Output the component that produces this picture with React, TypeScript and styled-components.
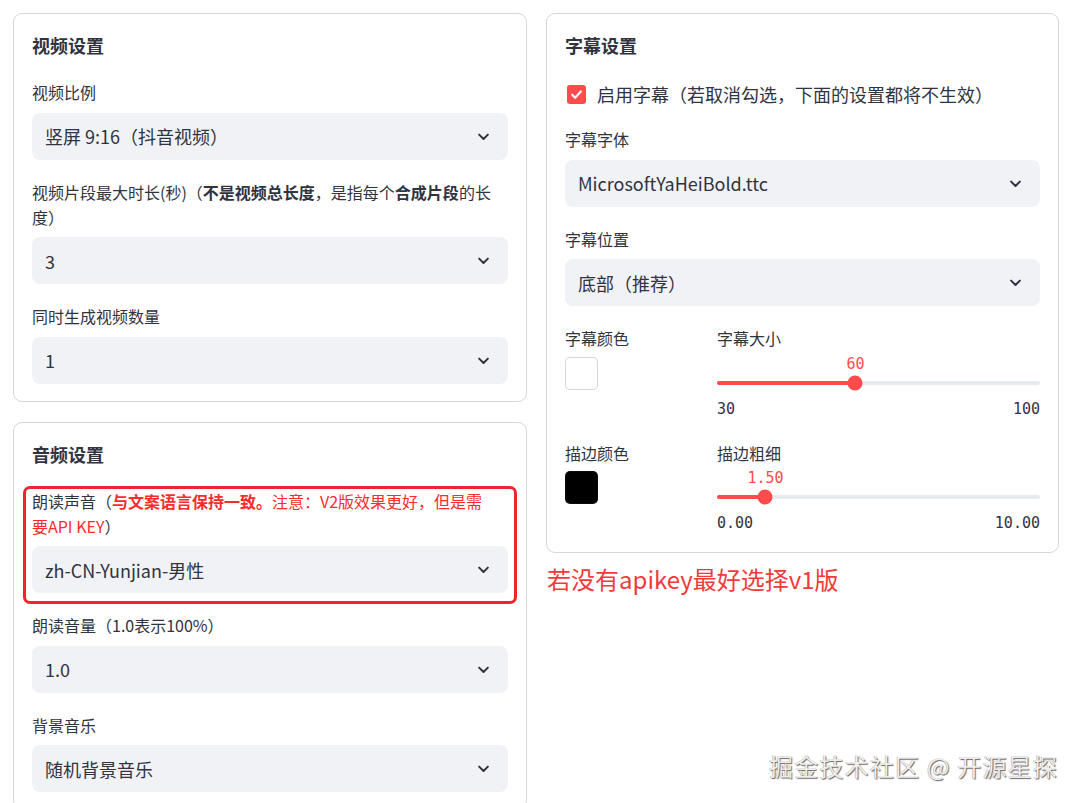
import styled, { createGlobalStyle } from 'styled-components';

const GlobalStyle = createGlobalStyle`
  html, body {
    margin: 0;
    padding: 0;
    background: #ffffff;
    overflow: hidden;
  }
  body {
    font-family: "Noto Sans CJK SC", "Noto Sans", sans-serif;
    color: #31333f;
  }
`;

const Page = styled.div`
  position: relative;
  width: 1080px;
  height: 803px;
  box-sizing: border-box;
  padding: 13px 21px 0 13px;
  display: grid;
  grid-template-columns: 514px 513px;
  column-gap: 19px;
  align-items: start;
  overflow: hidden;
`;

const Column = styled.div`
  display: flex;
  flex-direction: column;
  gap: 20px;
`;

const Card = styled.section`
  border: 1px solid rgba(49, 51, 63, 0.2);
  border-radius: 9px;
  padding: 19px 18px 17px;
  display: flex;
  flex-direction: column;
  gap: 20px;
`;

const CardTitle = styled.h3`
  margin: 0 0 2px;
  font-size: 18px;
  line-height: 25px;
  font-weight: 700;
`;

const Field = styled.div`
  display: flex;
  flex-direction: column;
`;

const Label = styled.label<{ $narrow?: boolean }>`
  font-size: 16px;
  line-height: 25px;
  margin-bottom: 7.5px;
  padding-right: ${(p) => (p.$narrow ? '20px' : '0')};
  color: #31333f;
`;

const Strong = styled.strong`
  font-weight: 700;
`;

const RedText = styled.span<{ $bold?: boolean }>`
  color: #ff2b2b;
  font-weight: ${(p) => (p.$bold ? 700 : 400)};
`;

const SelectBox = styled.div`
  height: 47px;
  box-sizing: border-box;
  background: #f0f2f6;
  border-radius: 8px;
  display: flex;
  align-items: center;
  justify-content: space-between;
  padding: 0 17px 0 13px;
  font-size: 18px;
  color: #31333f;
`;

// highlight frame drawn around the voice picker
const Highlight = styled.div`
  margin: -3px -9px -11px;
  padding: 0 6px 8px;
  border: 3px solid #f0242f;
  border-radius: 7px;
  display: flex;
  flex-direction: column;
`;

const CheckRow = styled.div`
  display: flex;
  align-items: center;
  gap: 11px;
  margin-top: 2px;
  padding-left: 2px;
  font-size: 18px;
  line-height: 25px;
`;

const CheckBox = styled.span`
  width: 19px;
  height: 19px;
  border-radius: 3px;
  background: #ff4b4b;
  display: flex;
  align-items: center;
  justify-content: center;
`;

const ControlGrid = styled.div`
  display: grid;
  grid-template-columns: 134px 1fr;
  column-gap: 18px;
  row-gap: 20px;
`;

const Swatch = styled.div<{ $color: string }>`
  width: 33px;
  height: 33px;
  box-sizing: border-box;
  border-radius: 5px;
  background: ${(p) => p.$color};
  border: 1px solid rgba(49, 51, 63, 0.2);
  margin-top: -2px;
`;

const SliderBlock = styled.div`
  margin-top: -7px;
`;

const SliderArea = styled.div`
  position: relative;
  height: 38px;
`;

const Track = styled.div`
  position: absolute;
  left: 0;
  right: 0;
  top: 29px;
  height: 4px;
  border-radius: 2px;
  background: #e6e9ef;
`;

const Fill = styled.div`
  position: absolute;
  left: 0;
  top: 0;
  bottom: 0;
  border-radius: 2px;
  background: #ff4b4b;
`;

const Thumb = styled.div`
  position: absolute;
  top: 50%;
  width: 15px;
  height: 15px;
  border-radius: 50%;
  background: #ff4b4b;
  transform: translate(-50%, -50%);
`;

const ThumbValue = styled.div`
  position: absolute;
  top: 0;
  transform: translateX(-50%);
  font-family: "DejaVu Sans Mono", "Liberation Mono", monospace;
  font-size: 15px;
  line-height: 24px;
  color: #ff4b4b;
  white-space: nowrap;
`;

const MinMax = styled.div`
  display: flex;
  justify-content: space-between;
  font-family: "DejaVu Sans Mono", "Liberation Mono", monospace;
  font-size: 15px;
  line-height: 24px;
  margin-top: 7px;
  color: #31333f;
`;

const Note = styled.div`
  margin-top: 12px;
  padding-left: 1px;
  font-size: 24px;
  line-height: 28px;
  color: #f23a3a;
`;

const Watermark = styled.div`
  position: absolute;
  right: 22px;
  bottom: 22px;
  font-size: 24px;
  line-height: 30px;
  color: #eeeeee;
  letter-spacing: 1.2px;
  text-shadow: 1px 1px 1px rgba(0, 0, 0, 0.6), -0.5px -0.5px 0 rgba(0, 0, 0, 0.35);
`;

const Chevron = () => (
  <svg width="15" height="15" viewBox="0 0 24 24" fill="none" stroke="#31333f" strokeWidth="3.2" strokeLinecap="round" strokeLinejoin="round">
    <polyline points="5 9 12 16 19 9" />
  </svg>
);

const Select = ({ value }: { value: string }) => (
  <SelectBox>
    <span>{value}</span>
    <Chevron />
  </SelectBox>
);

const Slider = ({ min, max, value, format }: { min: number; max: number; value: number; format: (n: number) => string }) => {
  const pct = ((value - min) / (max - min)) * 100;
  return (
    <SliderBlock>
      <SliderArea>
        <ThumbValue style={{ left: `${pct}%` }}>{format(value)}</ThumbValue>
        <Track>
          <Fill style={{ width: `${pct}%` }} />
          <Thumb style={{ left: `${pct}%` }} />
        </Track>
      </SliderArea>
      <MinMax>
        <span>{format(min)}</span>
        <span>{format(max)}</span>
      </MinMax>
    </SliderBlock>
  );
};

const App = () => (
  <>
    <GlobalStyle />
    <Page>
      <Column>
        <Card>
          <CardTitle>视频设置</CardTitle>
          <Field>
            <Label>视频比例</Label>
            <Select value="竖屏 9:16（抖音视频）" />
          </Field>
          <Field>
            <Label>
              视频片段最大时长(秒)（<Strong>不是视频总长度</Strong>，是指每个<Strong>合成片段</Strong>的长度）
            </Label>
            <Select value="3" />
          </Field>
          <Field>
            <Label>同时生成视频数量</Label>
            <Select value="1" />
          </Field>
        </Card>

        <Card>
          <CardTitle>音频设置</CardTitle>
          <Highlight>
            <Label $narrow>
              朗读声音（<RedText $bold>与文案语言保持一致。</RedText>
              <RedText>注意：V2版效果更好，但是需要API KEY</RedText>）
            </Label>
            <Select value="zh-CN-Yunjian-男性" />
          </Highlight>
          <Field>
            <Label>朗读音量（1.0表示100%）</Label>
            <Select value="1.0" />
          </Field>
          <Field>
            <Label>背景音乐</Label>
            <Select value="随机背景音乐" />
          </Field>
        </Card>
      </Column>

      <div>
        <Card>
          <CardTitle>字幕设置</CardTitle>
          <CheckRow>
            <CheckBox>
              <svg width="13" height="13" viewBox="0 0 24 24" fill="none" stroke="#ffffff" strokeWidth="4" strokeLinecap="round" strokeLinejoin="round">
                <polyline points="4 12.5 9.5 18 20 6.5" />
              </svg>
            </CheckBox>
            <span>启用字幕（若取消勾选，下面的设置都将不生效）</span>
          </CheckRow>
          <Field>
            <Label>字幕字体</Label>
            <Select value="MicrosoftYaHeiBold.ttc" />
          </Field>
          <Field>
            <Label>字幕位置</Label>
            <Select value="底部（推荐）" />
          </Field>
          <ControlGrid>
            <Field>
              <Label>字幕颜色</Label>
              <Swatch $color="#ffffff" />
            </Field>
            <Field>
              <Label>字幕大小</Label>
              <Slider min={30} max={100} value={60} format={(n) => String(n)} />
            </Field>
            <Field>
              <Label>描边颜色</Label>
              <Swatch $color="#000000" />
            </Field>
            <Field>
              <Label>描边粗细</Label>
              <Slider min={0} max={10} value={1.5} format={(n) => n.toFixed(2)} />
            </Field>
          </ControlGrid>
        </Card>
        <Note>若没有apikey最好选择v1版</Note>
      </div>

      <Watermark>掘金技术社区 @ 开源星探</Watermark>
    </Page>
  </>
);

export default App;
